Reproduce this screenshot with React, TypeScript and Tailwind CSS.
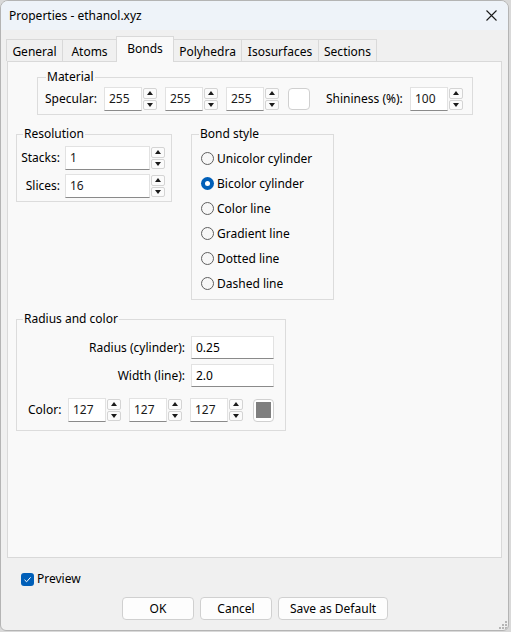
import React from "react";

const font = { fontFamily: '"Segoe UI", "Noto Sans", "Open Sans", sans-serif' };

function Spin({ value, w = "w-[38px]" }: { value: string; w?: string }) {
  return (
    <div className="flex h-[24px]">
      <div
        className={`${w} flex items-center border border-[#e2e2e2] border-b-[#8a8a8a] bg-white pl-[4px] text-[12px] text-[#1a1a1a]`}
      >
        {value}
      </div>
      <div className="flex w-[16px] flex-col gap-[1px] px-[1px] py-[1px]">
        <div className="flex flex-1 items-center justify-center rounded-[2px] border border-[#d4d4d4] bg-[#fbfbfb]">
          <div className="h-0 w-0 border-x-[3.5px] border-b-[4px] border-x-transparent border-b-[#1a1a1a]" />
        </div>
        <div className="flex flex-1 items-center justify-center rounded-[2px] border border-[#d4d4d4] bg-[#fbfbfb]">
          <div className="h-0 w-0 border-x-[3.5px] border-t-[4px] border-x-transparent border-t-[#1a1a1a]" />
        </div>
      </div>
    </div>
  );
}

function Radio({ label, checked }: { label: string; checked?: boolean }) {
  return (
    <div className="flex h-[25px] items-center">
      {checked ? (
        <div className="flex h-[13px] w-[13px] items-center justify-center rounded-full bg-[#005fb8]">
          <div className="h-[5px] w-[5px] rounded-full bg-white" />
        </div>
      ) : (
        <div className="h-[13px] w-[13px] rounded-full border border-[#5f5f5f] bg-[#f7f7f7]" />
      )}
      <span className="ml-[3px]">{label}</span>
    </div>
  );
}

const tabs = [
  { text: "General", w: "w-[57px]" },
  { text: "Atoms", w: "w-[55px]" },
  { text: "Bonds", w: "w-[58px]", active: true },
  { text: "Polyhedra", w: "w-[69px]" },
  { text: "Isosurfaces", w: "w-[78px]" },
  { text: "Sections", w: "w-[59px]" },
];

export default function App() {
  return (
    <div className="h-[632px] w-[511px] bg-[#d9d9d9]" style={font}>
      <div className="flex h-[631px] w-[509px] flex-col overflow-hidden rounded-t-[8px] rounded-b-[6px] border border-[#b4b4b4] bg-[#f0f0f0] text-[12px] leading-4 text-black">
        {/* title bar */}
        <div className="flex h-[29px] shrink-0 items-center bg-[#eef3f9] pl-[8px] pr-[8px]">
          <span className="mt-[1px]">Properties - ethanol.xyz</span>
          <svg className="ml-auto mr-[3px]" width="11" height="11" viewBox="0 0 11 11">
            <path d="M0.5 0.5 L10.5 10.5 M10.5 0.5 L0.5 10.5" stroke="#1a1a1a" strokeWidth="1.1" />
          </svg>
        </div>

        {/* tabs */}
        <div className="mt-[6px] flex h-[25px] items-end pl-[6px]">
          {tabs.map(({ text, w, active }) => (
            <div
              key={text}
              className={
                active
                  ? `${w} relative z-10 -mb-px -ml-px flex h-[26px] justify-center border border-b-0 border-[#d9d9d9] bg-[#f9f9f9] pt-[4px]`
                  : `${w} -ml-px flex h-[22px] justify-center border border-b-0 border-[#d9d9d9] bg-[#f0f0f0] pt-[4px]`
              }
            >
              {text}
            </div>
          ))}
        </div>

        {/* pane */}
        <div className="mx-[6px] flex h-[502px] flex-col border border-[#d9d9d9] bg-[#f9f9f9]">
          <fieldset className="ml-[29px] mt-[7px] w-[436px] border border-[#dcdcdc] px-[7px] pb-[3px]">
            <legend className="ml-[1px] px-[1px] leading-4">Material</legend>
            <div className="mt-[2px] flex items-center">
              <span className="w-[59px]">Specular:</span>
              <div className="flex gap-[7px]">
                <Spin value="255" />
                <Spin value="255" />
                <Spin value="255" />
              </div>
              <div className="ml-[8px] h-[22px] w-[22px] rounded-[4px] border border-[#d0d0d0] bg-white" />
              <span className="ml-[16px] w-[84px]">Shininess (%):</span>
              <Spin value="100" />
            </div>
          </fieldset>

          <div className="mt-[11px] flex items-start">
            <fieldset className="ml-[8px] w-[156px] border border-[#dcdcdc] pb-[3px] pl-[1px]">
              <legend className="ml-[5px] px-[1px] leading-4">Resolution</legend>
              <div className="mt-[4px] flex flex-col gap-[4px]">
                <div className="flex items-center">
                  <span className="w-[47px] pr-[5px] text-right">Stacks:</span>
                  <Spin value="1" w="w-[85px]" />
                </div>
                <div className="flex items-center">
                  <span className="w-[47px] pr-[5px] text-right">Slices:</span>
                  <Spin value="16" w="w-[85px]" />
                </div>
              </div>
            </fieldset>

            <fieldset className="ml-[19px] w-[143px] border border-[#dcdcdc] pb-[3px] pl-[9px]">
              <legend className="ml-[-2px] px-[1px] leading-4">Bond style</legend>
              <div className="mt-[4px] flex flex-col">
                <Radio label="Unicolor cylinder" />
                <Radio label="Bicolor cylinder" checked />
                <Radio label="Color line" />
                <Radio label="Gradient line" />
                <Radio label="Dotted line" />
                <Radio label="Dashed line" />
              </div>
            </fieldset>
          </div>

          <fieldset className="ml-[8px] mt-[11px] w-[270px] border border-[#dcdcdc] pb-[8px] pl-[11px]">
            <legend className="ml-[-5px] px-[1px] leading-4">Radius and color</legend>
            <div className="mt-[9px] flex flex-col">
              <div className="flex items-center">
                <span className="w-[163px] pr-[6px] text-right">Radius (cylinder):</span>
                <div className="flex h-[23px] w-[83px] items-center border border-[#e2e2e2] border-b-[#8a8a8a] bg-white pl-[4px]">
                  0.25
                </div>
              </div>
              <div className="mt-[5px] flex items-center">
                <span className="w-[163px] pr-[6px] text-right">Width (line):</span>
                <div className="flex h-[23px] w-[83px] items-center border border-[#e2e2e2] border-b-[#8a8a8a] bg-white pl-[4px]">
                  2.0
                </div>
              </div>
              <div className="mt-[11px] flex items-center">
                <span className="w-[40px]">Color:</span>
                <div className="flex gap-[7px]">
                  <Spin value="127" />
                  <Spin value="127" />
                  <Spin value="127" />
                </div>
                <div className="ml-[9px] flex h-[23px] w-[21px] items-center justify-center rounded-[4px] border border-[#d0d0d0] bg-white">
                  <div className="h-[16px] w-[15px] bg-[#7f7f7f]" />
                </div>
              </div>
            </div>
          </fieldset>
        </div>

        {/* preview */}
        <div className="ml-[20px] mt-[13px] flex items-center">
          <div className="flex h-[13px] w-[13px] items-center justify-center rounded-[3px] bg-[#005fb8]">
            <svg width="9" height="9" viewBox="0 0 9 9">
              <path d="M1.5 4.8 L3.6 6.8 L7.6 2.3" fill="none" stroke="white" strokeWidth="1" />
            </svg>
          </div>
          <span className="ml-[3px]">Preview</span>
        </div>

        {/* buttons */}
        <div className="ml-[121px] mt-[10px] flex gap-[6px]">
          {[
            { t: "OK", w: "w-[72px]" },
            { t: "Cancel", w: "w-[72px]" },
            { t: "Save as Default", w: "w-[110px]" },
          ].map(({ t, w }) => (
            <button
              key={t}
              className={`${w} flex h-[23px] items-center justify-center rounded-[4px] border border-[#d0d0d0] bg-[#fdfdfd]`}
            >
              {t}
            </button>
          ))}
        </div>

        <div className="mt-auto mb-[1px] mr-[1px] flex justify-end">
          <svg width="9" height="9" viewBox="0 0 9 9">
            {[
              [7, 1],
              [4, 4],
              [7, 4],
              [1, 7],
              [4, 7],
              [7, 7],
            ].map(([x, y]) => (
              <rect key={`${x}-${y}`} x={x} y={y} width="2" height="2" fill="#b5b5b5" />
            ))}
          </svg>
        </div>
      </div>
    </div>
  );
}
